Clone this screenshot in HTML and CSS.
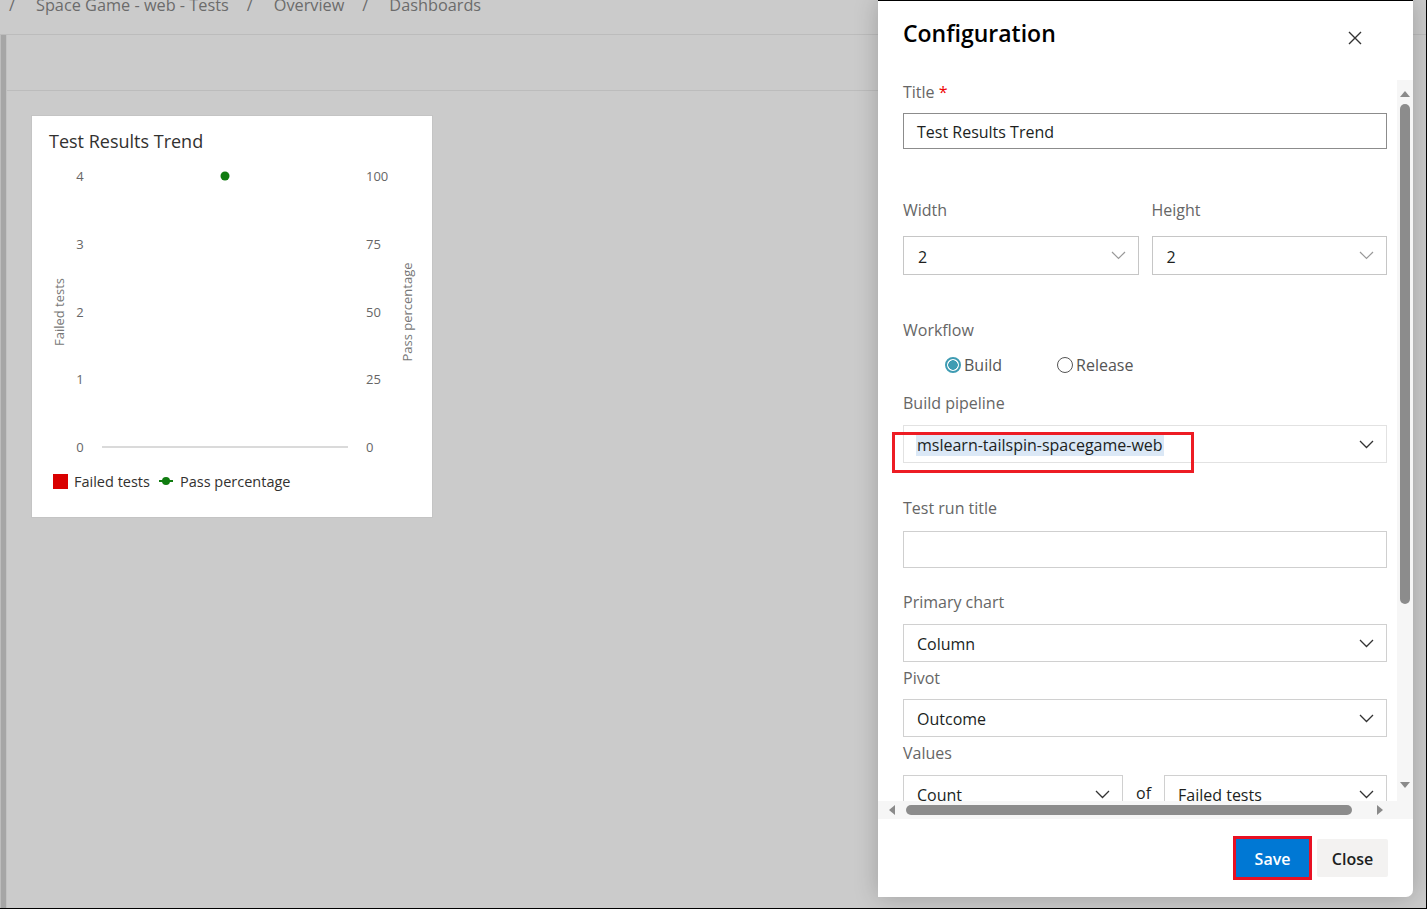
FILE: index.html
```html
<!DOCTYPE html>
<html lang="en">
<head>
<meta charset="utf-8">
<title>Configuration</title>
<link rel="stylesheet" href="styles.css">
</head>
<body>
<div class="page">
  <div class="backdrop">
    <div class="breadcrumb">
      <span class="sep">/</span>
      <span class="crumb">Space Game - web - Tests</span>
      <span class="sep">/</span>
      <span class="crumb">Overview</span>
      <span class="sep">/</span>
      <span class="crumb">Dashboards</span>
    </div>
    <div class="body-row">
      <div class="leftnav"></div>
      <div class="main">
        <div class="toolbar"></div>
        <div class="canvas">
          <section class="widget">
            <h2 class="widget-title">Test Results Trend</h2>
            <svg class="chart" width="399" height="314" viewBox="0 0 399 314">
              <g class="axis-l">
                <text x="47" y="24">4</text>
                <text x="47" y="92">3</text>
                <text x="47" y="160">2</text>
                <text x="47" y="227">1</text>
                <text x="47" y="295">0</text>
              </g>
              <g class="axis-r">
                <text x="333" y="24">100</text>
                <text x="333" y="92">75</text>
                <text x="333" y="160">50</text>
                <text x="333" y="227">25</text>
                <text x="333" y="295">0</text>
              </g>
              <text class="axis-title" transform="translate(26 160) rotate(-90)">Failed tests</text>
              <text class="axis-title" transform="translate(374 160) rotate(-90)">Pass percentage</text>
              <line x1="69" y1="295" x2="315" y2="295" stroke="#dadada" stroke-width="2"/>
              <circle cx="192" cy="24" r="4.5" fill="#107c10"/>
            </svg>
            <div class="legend">
              <span class="swatch-red"></span><span class="legend-text">Failed tests</span>
              <svg class="swatch-line" width="14" height="10" viewBox="0 0 14 10"><line x1="0" y1="5" x2="14" y2="5" stroke="#107c10" stroke-width="2"/><circle cx="7" cy="5" r="4" fill="#107c10"/></svg><span class="legend-text">Pass percentage</span>
            </div>
          </section>
        </div>
      </div>
    </div>
  </div>

  <aside class="panel">
    <header class="panel-head">
      <h1 class="panel-title">Configuration</h1>
      <button class="close-x" aria-label="Close">
        <svg width="14" height="14" viewBox="0 0 14 14"><path d="M1 1 L13 13 M13 1 L1 13" stroke="#333" stroke-width="1.4" fill="none"/></svg>
      </button>
    </header>
    <div class="scroll-area">
      <div class="viewport">
        <div class="form">
          <div class="lbl f-title">Title <span class="req">*</span></div>
          <div class="input strong c-title">Test Results Trend</div>

          <div class="pair f-size">
            <div>
              <div class="lbl">Width</div>
              <div class="dropdown light c-size"><span>2</span><svg class="chev" width="15" height="9" viewBox="0 0 15 9"><path d="M1 1 L7.5 7.5 L14 1" fill="none" stroke="#999" stroke-width="1.2"/></svg></div>
            </div>
            <div>
              <div class="lbl">Height</div>
              <div class="dropdown light c-size"><span>2</span><svg class="chev" width="15" height="9" viewBox="0 0 15 9"><path d="M1 1 L7.5 7.5 L14 1" fill="none" stroke="#999" stroke-width="1.2"/></svg></div>
            </div>
          </div>

          <div class="lbl f-workflow">Workflow</div>
          <div class="radios">
            <span class="radio on"></span><span class="radio-text">Build</span>
            <span class="radio"></span><span class="radio-text">Release</span>
          </div>

          <div class="lbl f-pipeline">Build pipeline</div>
          <div class="dropdown faint c-pipeline">
            <span class="selected">mslearn-tailspin-spacegame-web</span>
            <svg class="chev" width="15" height="9" viewBox="0 0 15 9"><path d="M1 1 L7.5 7.5 L14 1" fill="none" stroke="#333" stroke-width="1.3"/></svg>
            <span class="callout"></span>
          </div>

          <div class="lbl f-runtitle">Test run title</div>
          <div class="input c-runtitle"></div>

          <div class="lbl f-primary">Primary chart</div>
          <div class="dropdown c-std"><span>Column</span><svg class="chev" width="15" height="9" viewBox="0 0 15 9"><path d="M1 1 L7.5 7.5 L14 1" fill="none" stroke="#333" stroke-width="1.3"/></svg></div>

          <div class="lbl f-tight">Pivot</div>
          <div class="dropdown c-pivot"><span>Outcome</span><svg class="chev" width="15" height="9" viewBox="0 0 15 9"><path d="M1 1 L7.5 7.5 L14 1" fill="none" stroke="#333" stroke-width="1.3"/></svg></div>

          <div class="lbl f-tight">Values</div>
          <div class="values c-values">
            <div class="dropdown"><span>Count</span><svg class="chev" width="15" height="9" viewBox="0 0 15 9"><path d="M1 1 L7.5 7.5 L14 1" fill="none" stroke="#333" stroke-width="1.3"/></svg></div>
            <span class="of">of</span>
            <div class="dropdown"><span>Failed tests</span><svg class="chev" width="15" height="9" viewBox="0 0 15 9"><path d="M1 1 L7.5 7.5 L14 1" fill="none" stroke="#333" stroke-width="1.3"/></svg></div>
          </div>
        </div>
      </div>
      <div class="vscroll">
        <svg width="10" height="7" viewBox="0 0 10 7"><path d="M0 7 L5 1 L10 7 Z" fill="#8a8a8a"/></svg>
        <span class="vthumb"></span>
        <svg class="vdown" width="10" height="7" viewBox="0 0 10 7"><path d="M0 0 L5 6 L10 0 Z" fill="#8a8a8a"/></svg>
      </div>
    </div>
    <div class="hscroll">
      <svg width="7" height="10" viewBox="0 0 7 10"><path d="M7 0 L1 5 L7 10 Z" fill="#8a8a8a"/></svg>
      <span class="hthumb"></span>
      <svg width="7" height="10" viewBox="0 0 7 10"><path d="M0 0 L6 5 L0 10 Z" fill="#8a8a8a"/></svg>
    </div>
    <footer class="panel-foot">
      <button class="btn primary">Save</button>
      <button class="btn">Close</button>
    </footer>
  </aside>
  <div class="rightedge"></div>
</div>
</body>
</html>
```

FILE: styles.css
```css
* { box-sizing: border-box; }
html, body { margin: 0; padding: 0; }
body {
  font-family: "Open Sans", "Noto Sans", "Liberation Sans", sans-serif;
  color: #201f1e;
  background: #000;
  overflow: hidden;
}
.page {
  width: 1427px;
  height: 909px;
  display: flex;
  background: #cbcbcb;
  border-right: 1px solid #000;
  border-bottom: 1px solid #000;
  overflow: hidden;
}

/* ---------- dimmed background page ---------- */
.backdrop {
  width: 878px;
  flex: none;
  display: flex;
  flex-direction: column;
}
.breadcrumb {
  height: 35px;
  border-bottom: 1px solid #bcbcbc;
  display: flex;
  align-items: flex-start;
  font-size: 16.3px;
  line-height: 20px;
  color: #6b6b6b;
  padding-left: 9px;
  overflow: hidden;
}
.breadcrumb span { margin-top: -5px; }
.breadcrumb .sep { margin-right: 21px; }
.breadcrumb .crumb { margin-right: 18px; }
.body-row {
  flex: 1;
  display: flex;
}
.leftnav {
  width: 7px;
  background: linear-gradient(to right, #bdbdbd 0 1px, #a6a6a6 1px 6px, #c2c2c2 6px);
}
.main { flex: 1; display: flex; flex-direction: column; }
.toolbar {
  height: 56px;
  border-bottom: 1px solid #bcbcbc;
}
.canvas {
  flex: 1;
  padding: 24px 0 0 24px;
}
.widget {
  width: 402px;
  height: 403px;
  background: #fff;
  border: 1px solid #c4c4c4;
}
.widget-title {
  margin: 0;
  padding: 13px 0 0 17px;
  font-size: 18px;
  line-height: 24px;
  font-weight: 400;
  color: #323130;
}
.chart { display: block; margin: -1px 0 0 1px; }
.chart text {
  font-family: "Open Sans", "Noto Sans", sans-serif;
  font-size: 13px;
  fill: #666;
  dominant-baseline: central;
}
.chart .axis-l text { text-anchor: middle; }
.chart .axis-r text { text-anchor: start; }
.chart .axis-title { text-anchor: middle; fill: #777; }
.legend {
  display: flex;
  align-items: center;
  padding-left: 21px;
  margin-top: 5px;
  height: 20px;
  font-size: 14.5px;
  color: #323130;
}
.swatch-red {
  width: 15px;
  height: 15px;
  background: #d90000;
  margin-right: 6px;
}
.swatch-line { margin: 0 7px 0 9px; }

/* ---------- configuration panel ---------- */
.panel {
  width: 535px;
  height: 897px;
  flex: none;
  background: #fff;
  border-top: 1px solid #000;
  border-bottom-right-radius: 7px;
  box-shadow: 0 0 24px rgba(0,0,0,0.22);
  display: flex;
  flex-direction: column;
  position: relative;
  z-index: 1;
}
.rightedge {
  flex: 1;
  background: linear-gradient(#cbcbcb 0 34px, #bcbcbc 34px 35px, #cbcbcb 35px);
}
.panel-head {
  height: 79px;
  flex: none;
  display: flex;
  align-items: flex-start;
  justify-content: space-between;
  padding: 16px 51px 0 25px;
}
.panel-title {
  margin: 0;
  font-size: 23px;
  line-height: 32px;
  font-weight: 600;
  color: #000;
}
.close-x {
  border: 0;
  background: none;
  padding: 0;
  margin-top: 14px;
  width: 14px;
  height: 14px;
}
.close-x svg { display: block; }

.scroll-area {
  height: 721px;
  flex: none;
  display: flex;
}
.viewport {
  flex: 1;
  overflow: hidden;
  padding-left: 25px;
}
.form { width: 484px; }
.lbl {
  font-size: 16px;
  line-height: 22px;
  color: #666;
}
.req { color: #e00; }
.input, .dropdown {
  border: 1px solid #d0d0d0;
  font-size: 16px;
  color: #201f1e;
  display: flex;
  align-items: center;
  padding: 2px 12px 0 13px;
  position: relative;
}
.input.strong { border-color: #8c8c8c; }
.dropdown { justify-content: space-between; }
.dropdown .chev { margin-top: -2px; }
.dropdown.light { border-color: #c6c6c6; padding-left: 14px; }
.dropdown.faint { border-color: #e2e2e2; }
.chev { flex: none; }

.f-title { margin-top: 1px; }
.c-title { margin-top: 10px; height: 36px; }
.f-size { margin-top: 50px; }
.pair {
  display: grid;
  grid-template-columns: 1fr 1fr;
  column-gap: 13px;
}
.c-size { margin-top: 15px; height: 39px; }
.f-workflow { margin-top: 44px; }
.radios {
  margin-top: 13px;
  height: 22px;
  display: flex;
  align-items: center;
  padding-left: 42px;
  font-size: 16px;
  color: #555;
}
.radio {
  width: 16px;
  height: 16px;
  border: 1px solid #555;
  border-radius: 50%;
  margin-right: 3px;
}
.radio.on {
  border: 2px solid #3f9cb3;
  background: radial-gradient(circle, #3f9cb3 0 4.5px, #fff 5px);
}
.radio-text { margin-right: 55px; }
.f-pipeline { margin-top: 16px; }
.c-pipeline { margin-top: 11px; height: 38px; }
.selected {
  background: #dbe8f6;
  line-height: 22px;
  margin-left: -1px;
  padding: 0 1px;
}
.callout {
  position: absolute;
  left: -12px;
  top: 6px;
  width: 302px;
  height: 41px;
  border: 3px solid #ed1c24;
}
.f-runtitle { margin-top: 34px; }
.c-runtitle { margin-top: 12px; height: 37px; border-color: #cfcfcf; }
.f-primary { margin-top: 23px; }
.c-std { margin-top: 11px; height: 38px; }
.f-tight { margin-top: 5px; }
.c-pivot { margin-top: 10px; height: 38px; }
.c-values {
  margin-top: 11px;
  display: grid;
  grid-template-columns: 220px auto 1fr;
  column-gap: 13px;
  align-items: start;
}
.values .dropdown { height: 38px; }
.of { font-size: 16px; line-height: 38px; margin-top: -1px; color: #201f1e; }

.vscroll {
  width: 16px;
  flex: none;
  background: #f6f6f6;
  display: flex;
  flex-direction: column;
  align-items: center;
  padding-top: 10px;
}
.vthumb {
  margin-top: 7px;
  width: 10px;
  height: 500px;
  border-radius: 5px;
  background: #8c8c8c;
}
.vdown { margin-top: auto; margin-bottom: 12px; }

.hscroll {
  height: 18px;
  flex: none;
  background: #f6f6f6;
  display: flex;
  align-items: center;
  padding: 0 28px 0 10px;
}
.hthumb {
  width: 446px;
  height: 10px;
  border-radius: 5px;
  background: #8c8c8c;
  margin: 0 25px 0 11px;
}

.panel-foot {
  flex: 1;
  display: flex;
  justify-content: flex-end;
  align-items: flex-start;
  padding: 20px 25px 0 0;
  gap: 8px;
}
.btn {
  height: 38px;
  border: 0;
  border-radius: 2px;
  background: #f3f2f1;
  font-family: inherit;
  font-size: 16px;
  font-weight: 600;
  color: #201f1e;
  padding: 1px 10px 0;
  width: 71px;
}
.btn.primary {
  width: 73px;
  background: #0078d4;
  color: #fff;
  outline: 3px solid #e81123;
  outline-offset: 0;
  border-radius: 0;
}
```
